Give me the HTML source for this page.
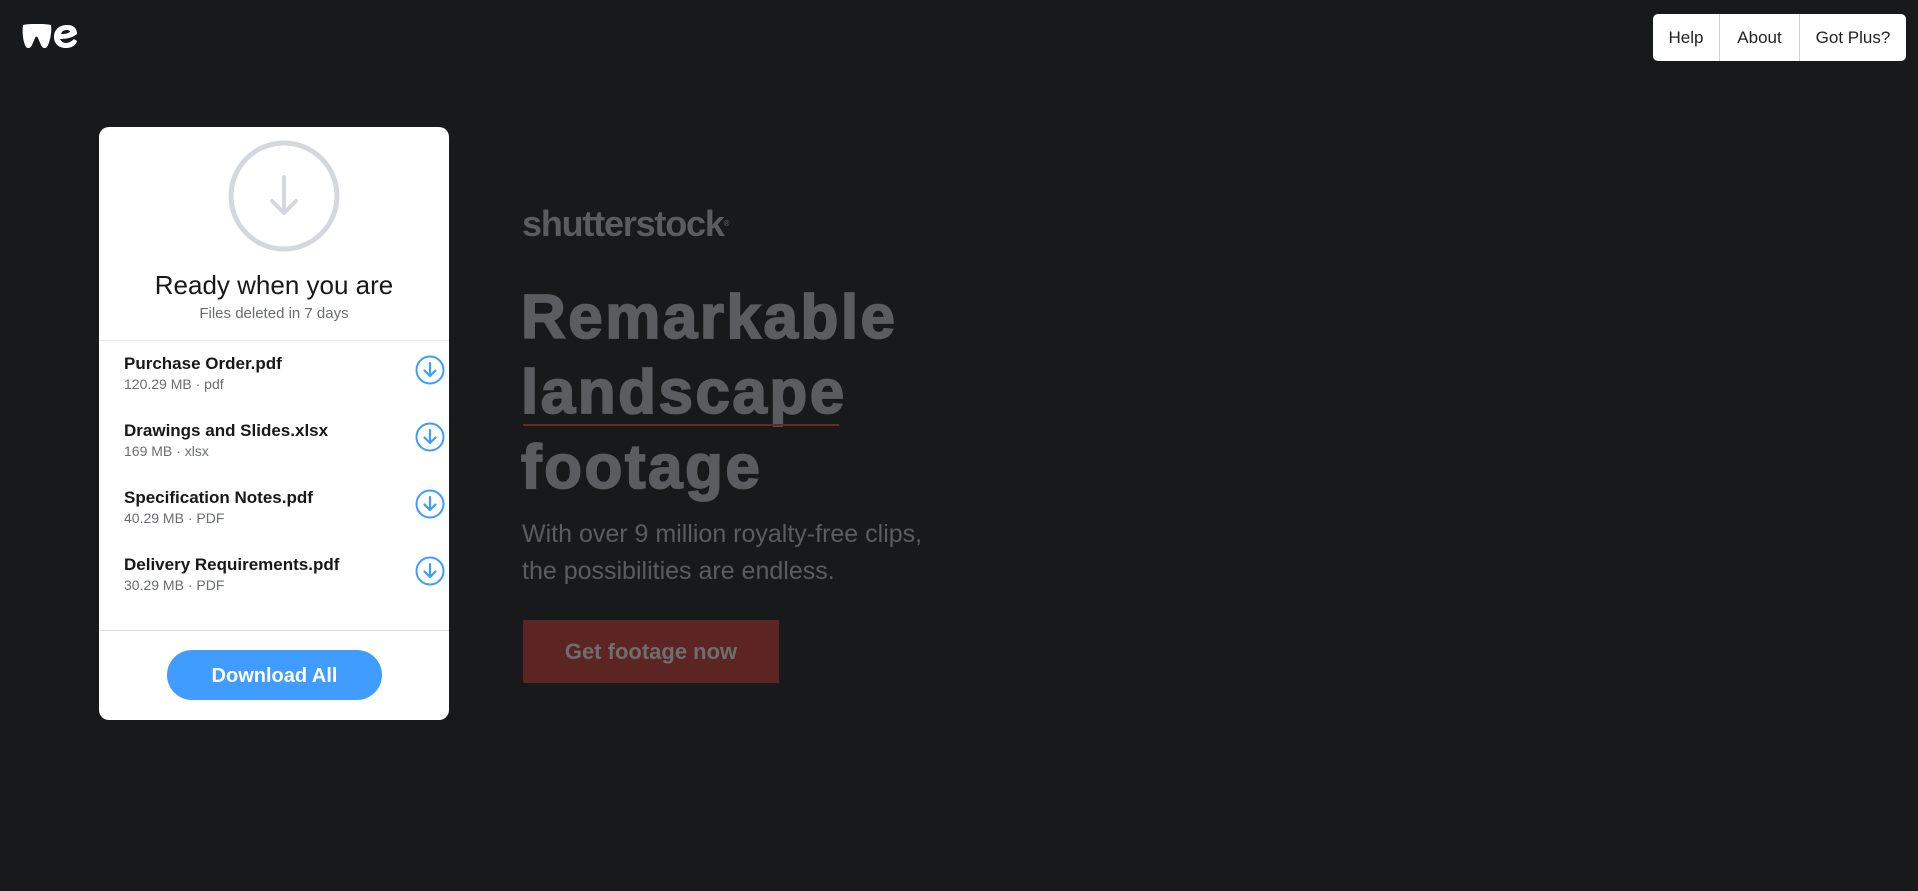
<!DOCTYPE html>
<html><head><meta charset="utf-8"><style>
*{margin:0;padding:0;box-sizing:border-box}
html,body{width:1918px;height:891px;background:#18191b;overflow:hidden;font-family:"Liberation Sans",sans-serif}
.abs{position:absolute}
.nav{left:1653px;top:14px;width:253px;height:47px;background:#fff;border-radius:5px;display:flex;font-size:17px;color:#222}
.nav div{height:47px;line-height:47px;text-align:center}
.card{left:99px;top:127px;width:350px;height:593px;background:#fff;border-radius:10px}
.fn{position:absolute;left:25px;font-size:17px;font-weight:bold;color:#17181a}
.fm{position:absolute;left:25px;font-size:14px;color:#6a6d70}
.ic{position:absolute;left:316px}
.ad{color:#5b5c5f}
</style></head><body>
<svg class="abs" style="left:22px;top:24px" width="56" height="25" viewBox="0 0 56 25">
<path d="M1 1 C8 -0.5 22 -0.5 29 1 C30 8 28 18 25 23 C23 25 20 24 19 21 L16 14 C15 12 14 12 13 14 L10 21 C9 24 6 25 4 23 C1 18 0 8 1 1Z" fill="#fff"/>
<path d="M55 10 C55 3 50 1 45 1 C37 1 32 6 32 13 C32 20 37 24 44 24 C50 24 54 21 55 17 L52 15 C50 17 47 19 44 19 C41 19 39 17 38 15 C44 15 50 14 55 10Z M39 10 C40 7 42 6 45 6 C47 6 48 7 48 8 C45 10 42 10 39 10Z" fill="#fff"/>
</svg>
<div class="abs nav"><div style="width:67px;border-right:1px solid #d0d3d6">Help</div><div style="width:80px;border-right:1px solid #d0d3d6">About</div><div style="flex:1">Got Plus?</div></div>

<div class="abs card">
<svg class="abs" style="left:129px;top:12px" width="112" height="114" viewBox="0 0 112 114"><circle cx="56" cy="57" r="53" fill="none" stroke="#d4d7db" stroke-width="5"/><path d="M56 38 V74 M44 62 L56 74 L68 62" fill="none" stroke="#d4d7db" stroke-width="4" stroke-linecap="round" stroke-linejoin="round"/></svg>
<div class="abs" style="left:0;width:350px;top:143px;text-align:center;font-size:26px;color:#17181a">Ready when you are</div>
<div class="abs" style="left:0;width:350px;top:178px;text-align:center;font-size:15px;color:#6a6d70">Files deleted in 7 days</div>
<div class="abs" style="left:0;top:213px;width:350px;height:1px;background:#e6e8ea"></div>

<div class="abs" style="left:0;top:227px;width:350px;height:67px"><div class="fn" style="top:0">Purchase Order.pdf</div><div class="fm" style="top:22px">120.29 MB · pdf</div><svg class="ic" style="top:1px" width="30" height="30" viewBox="0 0 30 30"><circle cx="15" cy="15" r="13.5" fill="none" stroke="#409cff" stroke-width="2"/><path d="M15 8 V21 M9.5 15.5 L15 21 L20.5 15.5" fill="none" stroke="#409cff" stroke-width="2.2" stroke-linecap="round" stroke-linejoin="round"/></svg></div>
<div class="abs" style="left:0;top:294px;width:350px;height:67px"><div class="fn" style="top:0">Drawings and Slides.xlsx</div><div class="fm" style="top:22px">169 MB · xlsx</div><svg class="ic" style="top:1px" width="30" height="30" viewBox="0 0 30 30"><circle cx="15" cy="15" r="13.5" fill="none" stroke="#409cff" stroke-width="2"/><path d="M15 8 V21 M9.5 15.5 L15 21 L20.5 15.5" fill="none" stroke="#409cff" stroke-width="2.2" stroke-linecap="round" stroke-linejoin="round"/></svg></div>
<div class="abs" style="left:0;top:361px;width:350px;height:67px"><div class="fn" style="top:0">Specification Notes.pdf</div><div class="fm" style="top:22px">40.29 MB · PDF</div><svg class="ic" style="top:1px" width="30" height="30" viewBox="0 0 30 30"><circle cx="15" cy="15" r="13.5" fill="none" stroke="#409cff" stroke-width="2"/><path d="M15 8 V21 M9.5 15.5 L15 21 L20.5 15.5" fill="none" stroke="#409cff" stroke-width="2.2" stroke-linecap="round" stroke-linejoin="round"/></svg></div>
<div class="abs" style="left:0;top:428px;width:350px;height:67px"><div class="fn" style="top:0">Delivery Requirements.pdf</div><div class="fm" style="top:22px">30.29 MB · PDF</div><svg class="ic" style="top:1px" width="30" height="30" viewBox="0 0 30 30"><circle cx="15" cy="15" r="13.5" fill="none" stroke="#409cff" stroke-width="2"/><path d="M15 8 V21 M9.5 15.5 L15 21 L20.5 15.5" fill="none" stroke="#409cff" stroke-width="2.2" stroke-linecap="round" stroke-linejoin="round"/></svg></div>

<div class="abs" style="left:0;top:503px;width:350px;height:1px;background:#dcdee0"></div>
<div class="abs" style="left:68px;top:523px;width:215px;height:50px;border-radius:25px;background:#409cff;color:#fff;font-weight:bold;font-size:20px;text-align:center;line-height:52px">Download All</div>
</div>

<div class="abs ad" style="left:522px;top:203px;font-size:36px;font-weight:bold;letter-spacing:-1.2px;line-height:42px">shutterstock<span style="font-size:8px;vertical-align:top">®</span></div>
<div class="abs ad" style="left:521px;top:280px;font-size:62px;font-weight:bold;line-height:75px;letter-spacing:2.5px;-webkit-text-stroke:1.8px #5b5c5f">Remarkable<br>landscape<br>footage</div>
<div class="abs" style="left:523px;top:424px;width:316px;height:2px;background:#6b2727"></div>
<div class="abs ad" style="left:522px;top:516px;font-size:25px;line-height:37px">With over 9 million royalty-free clips,<br>the possibilities are endless.</div>
<div class="abs" style="left:523px;top:620px;width:256px;height:63px;background:#5c2422;color:#6e6e6e;font-weight:bold;font-size:22px;text-align:center;line-height:63px">Get footage now</div>
</body></html>
